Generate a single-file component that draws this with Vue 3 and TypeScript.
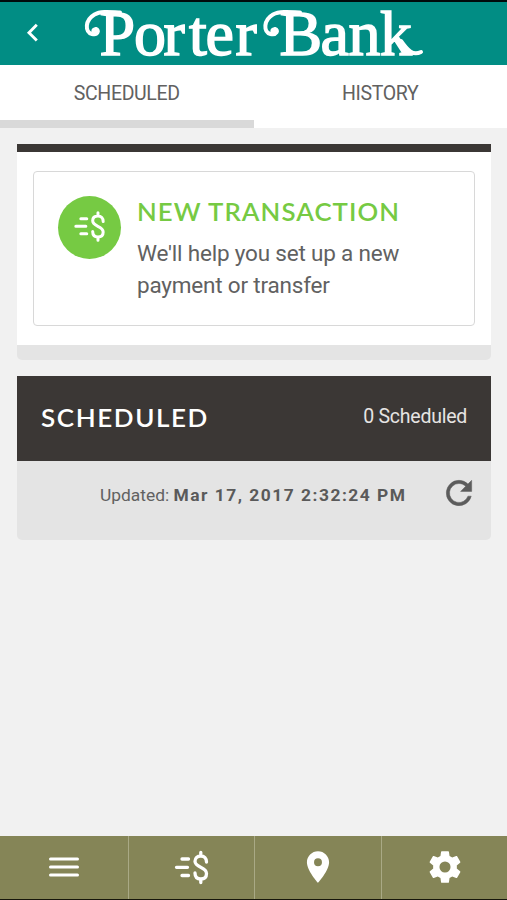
<script setup lang="ts">
import { ref } from 'vue'

type Tab = 'scheduled' | 'history'

const activeTab = ref<Tab>('scheduled')
const tabs: { id: Tab; label: string }[] = [
  { id: 'scheduled', label: 'SCHEDULED' },
  { id: 'history', label: 'HISTORY' },
]
const scheduledCount = ref(0)
const updatedAt = ref('Mar 17, 2017 2:32:24 PM')
</script>

<template>
  <div class="screen">
    <header class="header">
      <button class="back" aria-label="Back">
        <svg width="14" height="22" viewBox="0 0 14 22"><path d="M11.800 2.800 4 10.700l7.800 7.900" fill="none" stroke="#fff" stroke-width="2.900" /></svg>
      </button>
      <svg class="logo" width="344" height="60" viewBox="82 3 344 60">
        <g class="swash">
          <path d="M120 12.500C108 11.800 100 11.200 94.500 14.500C85 20 84.500 32 92 34C98 35.500 99.500 30 96 29" />
          <path d="M300 12.500C288 11.800 279 11.200 273 14.500C263.500 20 263 32 270.500 34C276.500 35.500 279 30 275 29" />
          <path d="M401 41C408 51 413 56 421 52" />
        </g>
        <circle cx="95" cy="31" r="3.600" fill="#fff" />
        <circle cx="274" cy="31" r="3.600" fill="#fff" />
        <text class="wordmark" y="55" x="99.500 134 163.500 189 205.500 235.500">Porter</text>
        <text class="wordmark" y="55" x="279.500 320.500 348.500 380">Bank</text>
      </svg>
    </header>

    <nav class="tabs">
      <button v-for="tab in tabs" :key="tab.id" class="tab" :class="{ active: tab.id === activeTab }" @click="activeTab = tab.id">
        {{ tab.label }}
      </button>
    </nav>

    <main class="content">
      <section class="card">
        <div class="card-body">
          <button class="transaction">
            <span class="badge">
              <svg width="31" height="31" viewBox="0 0 34 34"><g fill="none" stroke="#fff" stroke-width="3.300" stroke-linecap="round"><path d="M7.500 8.500H14M2 16.800H13M7.500 25H14" /><path d="M32 11.500C32 8 29.800 5.500 26.300 5.500S20.500 7.500 20.500 10.800C20.500 17.500 32 16 32 23C32 26.500 29.800 28.500 26.300 28.500S20.500 26.500 20.500 22.500M26.300 2v3M26.300 29v3" /></g></svg>
            </span>
            <span class="copy">
              <svg class="title" width="263" height="26" viewBox="0 0 263 26"><text x="0" y="22" textLength="263" lengthAdjust="spacingAndGlyphs">NEW TRANSACTION</text></svg>
              <span class="desc">We'll help you set up a new<br />payment or transfer</span>
            </span>
          </button>
        </div>
      </section>

      <section class="list">
        <div class="list-head">
          <svg class="heading" width="168" height="26" viewBox="0 0 168 26"><text x="0" y="22" textLength="168" lengthAdjust="spacingAndGlyphs">SCHEDULED</text></svg>
          <span class="count">{{ scheduledCount }} Scheduled</span>
        </div>
        <div class="list-foot">
          <p class="updated">Updated: <strong>{{ updatedAt }}</strong></p>
          <button class="refresh" aria-label="Refresh">
            <svg width="38" height="38" viewBox="0 0 24 24"><path fill="#5c5c5c" stroke="#5c5c5c" stroke-width=".3" d="M17.650 6.350A7.958 7.958 0 0 0 12 4a8 8 0 1 0 7.730 10h-2.080A6 6 0 1 1 12 6c1.660 0 3.140.69 4.220 1.780L13 11h7V4z" /></svg>
          </button>
        </div>
      </section>
    </main>

    <footer class="nav">
      <button class="nav-item" aria-label="Menu">
        <svg width="30" height="22" viewBox="0 0 30 22"><path d="M1.500 3h27M1.500 11h27M1.500 19h27" stroke="#fff" stroke-width="3" stroke-linecap="round" /></svg>
      </button>
      <button class="nav-item" aria-label="Transactions">
        <svg width="34" height="34" viewBox="0.500 -0.500 34 34"><g fill="none" stroke="#fff" stroke-width="3.300" stroke-linecap="round"><path d="M7.500 8.500H14M2 16.800H13M7.500 25H14" /><path d="M32 11.500C32 8 29.800 5.500 26.300 5.500S20.500 7.500 20.500 10.800C20.500 17.500 32 16 32 23C32 26.500 29.800 28.500 26.300 28.500S20.500 26.500 20.500 22.500M26.300 2v3M26.300 29v3" /></g></svg>
      </button>
      <button class="nav-item" aria-label="Locations">
        <svg width="38" height="38" viewBox="0 0 24 24"><path fill="#fff" d="M12 2C8.130 2 5 5.130 5 9c0 5.250 7 13 7 13s7-7.750 7-13c0-3.870-3.130-7-7-7zm0 9.500a2.500 2.500 0 1 1 0-5 2.500 2.500 0 0 1 0 5z" /></svg>
      </button>
      <button class="nav-item" aria-label="Settings">
        <svg width="38" height="38" viewBox="0 0 24 24"><path fill="#fff" d="M19.430 12.980c.04-.32.07-.64.07-.98s-.03-.66-.07-.98l2.110-1.650c.19-.15.24-.42.12-.64l-2-3.460c-.12-.22-.39-.3-.61-.22l-2.490 1c-.52-.4-1.080-.73-1.690-.98l-.38-2.650A.488.488 0 0 0 14 2h-4c-.25 0-.46.18-.49.42l-.38 2.650c-.61.25-1.170.59-1.690.98l-2.490-1c-.23-.09-.49 0-.61.22l-2 3.460c-.13.22-.07.49.12.64l2.110 1.650c-.04.32-.07.65-.07.98s.03.66.07.98l-2.110 1.650c-.19.15-.24.42-.12.64l2 3.460c.12.22.39.3.61.22l2.490-1c.52.4 1.080.73 1.690.98l.38 2.650c.03.24.24.42.49.42h4c.25 0 .46-.18.49-.42l.38-2.650c.61-.25 1.170-.59 1.690-.98l2.490 1c.23.09.49 0 .61-.22l2-3.460c.12-.22.07-.49-.12-.64l-2.110-1.650zM12 15.500a3.500 3.500 0 1 1 0-7 3.500 3.500 0 0 1 0 7z" /></svg>
      </button>
    </footer>
  </div>
</template>

<style>
body {
  background: #f1f1f1;
}
</style>

<style scoped>
.screen {
  display: flex;
  flex-direction: column;
  box-sizing: border-box;
  height: 900px;
  overflow: hidden;
  border-top: 2px solid #000b0b;
  border-bottom: 1px solid #16160b;
  background: #f1f1f1;
  font-family: Roboto, sans-serif;
  color: #616161;
}
button {
  margin: 0;
  padding: 0;
  border: 0;
  background: none;
  font: inherit;
  color: inherit;
  text-align: left;
}
svg {
  display: block;
  flex: none;
  overflow: visible;
}
.header {
  display: flex;
  align-items: flex-start;
  height: 63px;
  flex: none;
  background: #018d84;
}
.back {
  padding: 20px 0 0 25px;
  width: 82px;
}
.logo {
  margin-top: 1px;
}
.wordmark {
  font-family: 'Liberation Serif', serif;
  font-size: 64px;
  fill: #fff;
  stroke: #fff;
  stroke-width: 1.500px;
}
.swash path {
  fill: none;
  stroke: #fff;
  stroke-width: 4;
  stroke-linecap: round;
}
.tabs {
  display: flex;
  height: 63px;
  flex: none;
  background: #fff;
}
.tab {
  flex: 1;
  box-sizing: border-box;
  padding-top: 2px;
  border-bottom: 8px solid transparent;
  text-align: center;
  font-size: 19.500px;
  letter-spacing: -0.350px;
}
.tab.active {
  border-bottom-color: #d9d9d9;
}
.content {
  flex: 1;
  padding: 16px 16px 0 17px;
}
.card {
  border-top: 8px solid #3b3735;
  border-bottom: 15px solid #e4e4e4;
  border-radius: 0 0 5px 5px;
  background: #fff;
}
.card-body {
  padding: 18.500px 16px 19.500px;
}
.transaction {
  display: flex;
  align-items: flex-start;
  gap: 16px;
  box-sizing: border-box;
  width: 100%;
  height: 155px;
  padding: 24.500px 24px 0;
  border: 1.500px solid #d8d8d8;
  border-radius: 4px;
}
.badge {
  display: flex;
  align-items: center;
  justify-content: center;
  flex: none;
  box-sizing: border-box;
  width: 63px;
  height: 63px;
  padding-bottom: 3px;
  border-radius: 50%;
  background: #76ca43;
}
.copy {
  display: block;
  padding-top: 3px;
}
.title text {
  font-family: Lato, sans-serif;
  font-size: 24.500px;
  font-weight: 600;
  letter-spacing: 1px;
  fill: #76ca43;
}
.desc {
  display: block;
  margin-top: 13px;
  font-size: 22.500px;
  letter-spacing: -0.190px;
  line-height: 31.500px;
  white-space: nowrap;
}
.list {
  margin-top: 16px;
}
.list-head {
  display: flex;
  align-items: center;
  justify-content: space-between;
  box-sizing: border-box;
  height: 85px;
  padding: 0 24px 6px;
  background: #3b3735;
}
.heading {
  margin-top: 5px;
}
.heading text {
  font-family: Lato, sans-serif;
  font-size: 24.500px;
  font-weight: 600;
  letter-spacing: 1.500px;
  fill: #fff;
}
.count {
  margin-top: 1px;
  font-size: 19.500px;
  letter-spacing: -0.250px;
  color: #e6e4e3;
}
.list-foot {
  display: flex;
  align-items: flex-start;
  height: 79px;
  border-radius: 0 0 5px 5px;
  background: #e4e4e4;
}
.updated {
  flex: 1;
  margin: 23px 0 0 83px;
  font-size: 17.400px;
  line-height: 22px;
  white-space: nowrap;
}
.updated strong {
  font-weight: 700;
  letter-spacing: 1.500px;
  color: #5a5a5a;
}
.refresh {
  margin: 12.500px 13px 0 0;
}
.nav {
  display: grid;
  grid-template-columns: 128px 126px 127px 126px;
  height: 63px;
  flex: none;
  background: #858557;
}
.nav-item {
  display: flex;
  align-items: center;
  justify-content: center;
  box-sizing: border-box;
  padding-bottom: 2px;
}
.nav-item + .nav-item {
  border-left: 1px solid #a9a985;
}
</style>
